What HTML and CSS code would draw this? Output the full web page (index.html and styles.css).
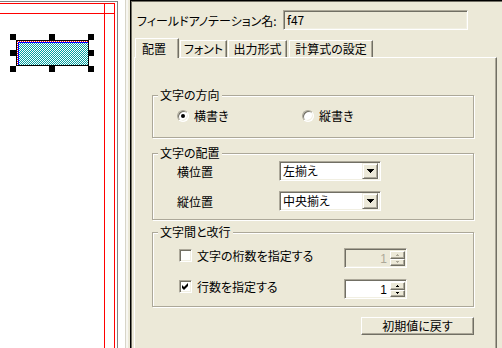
FILE: index.html
```html
<!DOCTYPE html>
<html lang="ja">
<head>
<meta charset="utf-8">
<link rel="stylesheet" href="styles.css">
</head>
<body>
<div class="app">
  <div class="canvas">
    <div class="page"></div>
    <div class="guide guide-h guide-top"></div>
    <div class="guide guide-h guide-top2"></div>
    <div class="guide guide-v guide-left"></div>
    <div class="guide guide-v guide-right"></div>
    <div class="shape"></div>
    <div class="handle h-tl"></div>
    <div class="handle h-tm"></div>
    <div class="handle h-tr"></div>
    <div class="handle h-ml"></div>
    <div class="handle h-mr"></div>
    <div class="handle h-bl"></div>
    <div class="handle h-bm"></div>
    <div class="handle h-br"></div>
  </div>
  <div class="splitter"></div>
  <div class="pane">
    <div class="header">
      <span class="name-label">フィールドアノテーション名:</span>
      <div class="textbox">f47</div>
    </div>
    <div class="tabs">
      <div class="tab active tab-place">配置</div>
      <div class="tab tab-font">フォント</div>
      <div class="tab tab-output">出力形式</div>
      <div class="tab tab-formula">計算式の設定</div>
    </div>
    <div class="panel">
      <div class="panel-body">
        <fieldset class="group group-dir">
          <legend>文字の方向</legend>
          <div class="group-body">
            <div class="radios">
              <label class="radio-opt"><span class="radio checked"></span>横書き</label>
              <label class="radio-opt"><span class="radio"></span>縦書き</label>
            </div>
          </div>
        </fieldset>
        <fieldset class="group group-align">
          <legend>文字の配置</legend>
          <div class="group-body">
            <div class="field-row">
              <span class="field-label">横位置</span>
              <div class="combo"><span class="combo-text">左揃え</span><span class="combo-btn"><svg width="7" height="4" viewBox="0 0 7 4"><path d="M0 0h7v1h-1v1h-1v1h-1v1h-1v-1h-1v-1h-1v-1h-1z" fill="#000"/></svg></span></div>
            </div>
            <div class="field-row second">
              <span class="field-label">縦位置</span>
              <div class="combo"><span class="combo-text">中央揃え</span><span class="combo-btn"><svg width="7" height="4" viewBox="0 0 7 4"><path d="M0 0h7v1h-1v1h-1v1h-1v1h-1v-1h-1v-1h-1v-1h-1z" fill="#000"/></svg></span></div>
            </div>
          </div>
        </fieldset>
        <fieldset class="group group-spacing">
          <legend>文字間と改行</legend>
          <div class="group-body">
            <div class="check-row">
              <label class="check-opt"><span class="checkbox"></span>文字の桁数を指定する</label>
              <div class="spinner disabled"><span class="spin-value">1</span><span class="spin-btns"><span class="spin-btn"><svg width="3" height="2" viewBox="0 0 3 2"><path d="M1 0h1v1h1v1H0V1h1z" fill="#aca899"/></svg></span><span class="spin-btn"><svg width="3" height="2" viewBox="0 0 3 2"><path d="M0 0h3v1H2v1H1V1H0z" fill="#aca899"/></svg></span></span></div>
            </div>
            <div class="check-row second">
              <label class="check-opt"><span class="checkbox"><svg width="9" height="9" viewBox="0 0 9 9"><path d="M1 3L3 5L7 1L7 4L3 8L1 6Z" fill="#000"/></svg></span>行数を指定する</label>
              <div class="spinner"><span class="spin-value">1</span><span class="spin-btns"><span class="spin-btn"><svg width="3" height="2" viewBox="0 0 3 2"><path d="M1 0h1v1h1v1H0V1h1z" fill="#000"/></svg></span><span class="spin-btn"><svg width="3" height="2" viewBox="0 0 3 2"><path d="M0 0h3v1H2v1H1V1H0z" fill="#000"/></svg></span></span></div>
            </div>
          </div>
        </fieldset>
        <button class="reset-btn">初期値に戻す</button>
      </div>
    </div>
  </div>
</div>
</body>
</html>
```

FILE: styles.css
```css
html, body {
  margin: 0;
  padding: 0;
}
body {
  width: 502px;
  height: 348px;
  overflow: hidden;
  background: #ece9d8;
  font-family: "Noto Sans CJK JP", "Noto Sans", sans-serif;
  font-size: 12px;
  font-feature-settings: "palt";
  color: #000;
}
.app {
  display: flex;
  height: 348px;
}

/* ---------- canvas ---------- */
.canvas {
  flex: none;
  width: 125px;
  height: 348px;
  background: #fff;
  position: relative;
  overflow: hidden;
}
.page {
  position: absolute;
  left: 0;
  top: 1px;
  width: 117px;
  height: 400px;
  border-top: 1px solid #808080;
  border-right: 1px solid #808080;
}
.guide {
  position: absolute;
  background: #ff0000;
}
.guide-h { left: 0; width: 115px; height: 1px; }
.guide-top { top: 3px; }
.guide-top2 { top: 13px; }
.guide-v { top: 3px; width: 1px; height: 400px; }
.guide-left { left: 104px; }
.guide-right { left: 114px; }

.shape {
  position: absolute;
  left: 16px;
  top: 40px;
  width: 73px;
  height: 26px;
  box-sizing: border-box;
  border: 1px solid #000;
  background:
    linear-gradient(#0000ff, #0000ff) 1px 1px / 100% 1px no-repeat,
    linear-gradient(#0000ff, #0000ff) 1px 1px / 1px 100% no-repeat,
    repeating-linear-gradient(90deg, #ff0000 0 1px, #ffffff 1px 2px) 0 0 / 100% 1px no-repeat,
    repeating-linear-gradient(180deg, #ff0000 0 1px, #ffffff 1px 2px) 0 0 / 1px 100% no-repeat,
    repeating-conic-gradient(#00a0a0 0 25%, #ffffff 0 50%) 0 0 / 2px 2px;
}
.handle {
  position: absolute;
  width: 6px;
  height: 6px;
  background: #000;
}
.h-tl { left: 10px; top: 34px; }
.h-tm { left: 49px; top: 34px; }
.h-tr { left: 88px; top: 34px; }
.h-ml { left: 10px; top: 50px; }
.h-mr { left: 88px; top: 50px; }
.h-bl { left: 10px; top: 66px; }
.h-bm { left: 49px; top: 66px; }
.h-br { left: 88px; top: 66px; }

/* ---------- splitter ---------- */
.splitter {
  flex: none;
  width: 5px;
  background: linear-gradient(to right, #d8d5c8 0 1px, #f7f6f1 1px 3px, #ece9d8 3px);
}

/* ---------- right pane ---------- */
.pane {
  flex: 1;
  display: flex;
  flex-direction: column;
  border-left: 1px solid #000;
  border-top: 1px solid #000;
  box-shadow: inset 1px 1px 0 #716f64;
  min-width: 0;
}
.header {
  display: flex;
  align-items: center;
  padding: 9px 0 0 6px;
  height: 20px;
}
.name-label {
  width: 146px;
  flex: none;
  white-space: nowrap;
  line-height: 20px;
  padding-top: 2px;
}
.textbox {
  width: 185px;
  height: 20px;
  box-sizing: border-box;
  border: 1px solid;
  border-color: #aca899 #fff #fff #aca899;
  box-shadow: inset 1px 1px 0 #716f64, inset -1px -1px 0 #f1efe2;
  padding-left: 3px;
  line-height: 17px;
  background: #ece9d8;
}

.tabs {
  display: flex;
  align-items: flex-end;
  margin-top: 8px;
  padding-left: 4px;
  height: 19px;
}
.tab {
  flex: none;
  box-sizing: border-box;
  height: 17px;
  border: 1px solid;
  border-bottom: 0;
  border-color: #fff #716f64 transparent #fff;
  box-shadow: inset -1px 0 0 #aca899;
  line-height: 15px;
  text-align: center;
  margin-right: 1px;
  white-space: nowrap;
}
.tab.active {
  height: 20px;
  padding-top: 2px;
  margin-bottom: -1px;
  position: relative;
  z-index: 1;
  background: #ece9d8;
  text-align: left;
  padding-left: 6px;
}
.tab-place { width: 44px; }
.tab-font { width: 47px; }
.tab-output { width: 59px; }
.tab-formula { width: 84px; margin-left: 1px; }

.panel {
  margin-left: 3px;
  width: 363px;
  height: 300px;
  flex: none;
  box-sizing: border-box;
  border: 1px solid;
  border-color: #fff #716f64 #716f64 #fff;
  box-shadow: inset -1px -1px 0 #aca899;
  padding: 31px 0 0 17px;
}
.panel-body {
  width: 322px;
  display: flex;
  flex-direction: column;
}

/* group boxes */
.group {
  margin: 0;
  padding: 0;
  min-width: 0;
  border: 1px solid #aca899;
  box-shadow: inset 1px 1px 0 #fff, 1px 1px 0 #fff;
}
.group legend {
  padding: 0 2px;
  margin-left: 5px;
  line-height: 12px;
  height: 12px;
  background: #ece9d8;
}
.group-dir .group-body { padding: 8px 0 14px 24px; }
.group-align { margin-top: 9px; }
.group-align .group-body { padding: 2px 0 8px 24px; }
.group-spacing { margin-top: 6px; }
.group-spacing .group-body { padding: 10px 0 7px 26px; }

.radios {
  display: flex;
  height: 14px;
  align-items: center;
}
.radio-opt {
  display: flex;
  align-items: center;
  width: 125px;
  line-height: 14px;
}
.radio {
  position: relative;
  width: 12px;
  height: 12px;
  box-sizing: border-box;
  border-radius: 50%;
  border: 1px solid;
  border-color: #aca899 #fff #fff #aca899;
  box-shadow: inset 1px 1px 0 #716f64, inset -1px -1px 0 #f1efe2;
  background: #fff;
  margin-right: 5px;
}
.radio.checked::after {
  content: "";
  position: absolute;
  left: 3px;
  top: 3px;
  width: 4px;
  height: 4px;
  border-radius: 50%;
  background: #000;
}

.field-row {
  display: flex;
  align-items: center;
  height: 20px;
}
.field-row.second { margin-top: 10px; }
.field-label {
  width: 102px;
  flex: none;
}
.combo {
  width: 102px;
  height: 20px;
  box-sizing: border-box;
  border: 1px solid;
  border-color: #aca899 #fff #fff #aca899;
  box-shadow: inset 1px 1px 0 #716f64, inset -1px -1px 0 #f1efe2;
  background: #fff;
  display: flex;
  align-items: center;
  padding: 2px;
}
.combo-text {
  flex: 1;
  padding-left: 1px;
  line-height: 16px;
}
.combo-btn {
  width: 16px;
  height: 16px;
  box-sizing: border-box;
  border: 1px solid;
  border-color: #f1efe2 #716f64 #716f64 #f1efe2;
  box-shadow: inset 1px 1px 0 #fff, inset -1px -1px 0 #aca899;
  background: #ece9d8;
  display: flex;
  align-items: center;
  justify-content: center;
}
.combo-btn svg { display: block; }

.check-row {
  display: flex;
  align-items: flex-start;
  height: 20px;
}
.check-row.second { margin-top: 11px; }
.check-opt {
  display: flex;
  align-items: center;
  width: 165px;
  flex: none;
  height: 15px;
  line-height: 15px;
}
.checkbox {
  width: 13px;
  height: 13px;
  box-sizing: border-box;
  border: 1px solid;
  border-color: #aca899 #fff #fff #aca899;
  box-shadow: inset 1px 1px 0 #716f64, inset -1px -1px 0 #f1efe2;
  background: #fff;
  margin-right: 5px;
  padding: 1px;
  display: flex;
}
.checkbox svg { display: block; }
.spinner {
  width: 63px;
  height: 20px;
  box-sizing: border-box;
  border: 1px solid;
  border-color: #aca899 #fff #fff #aca899;
  box-shadow: inset 1px 1px 0 #716f64, inset -1px -1px 0 #f1efe2;
  background: #fff;
  display: flex;
  padding: 2px 1px 1px 2px;
}
.spinner.disabled {
  background: #ece9d8;
  color: #aca899;
}
.spin-value {
  flex: 1;
  text-align: right;
  padding-right: 3px;
  line-height: 16px;
  font-family: "Liberation Sans", sans-serif;
}
.spin-btns {
  width: 15px;
  display: flex;
  flex-direction: column;
}
.spin-btn {
  flex: 1;
  box-sizing: border-box;
  border: 1px solid;
  border-color: #fff #716f64 #716f64 #fff;
  box-shadow: inset -1px -1px 0 #aca899;
  background: #ece9d8;
  display: flex;
  align-items: center;
  justify-content: center;
}
.spin-btn svg { display: block; }

.reset-btn {
  align-self: flex-end;
  margin-top: 10px;
  width: 113px;
  height: 18px;
  box-sizing: border-box;
  border: 1px solid;
  border-color: #fff #716f64 #716f64 #fff;
  box-shadow: inset -1px -1px 0 #aca899;
  background: #ece9d8;
  font-family: inherit;
  font-size: 12px;
  font-feature-settings: "palt";
  line-height: 14px;
  padding: 0;
  color: #000;
}
```
